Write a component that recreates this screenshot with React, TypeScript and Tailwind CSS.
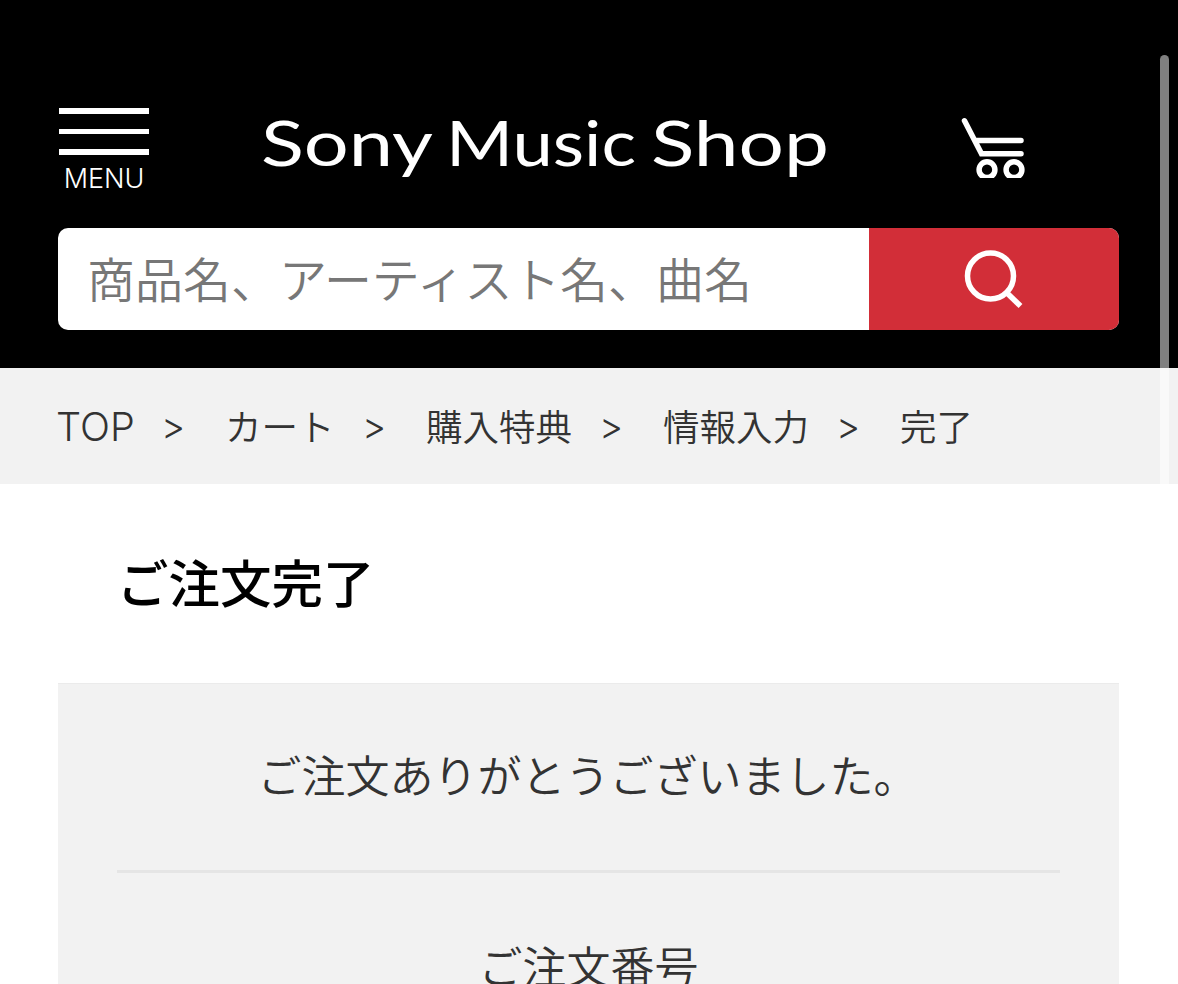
const crumbs = [
  { label: 'カート', width: 'w-[110px]' },
  { label: '購入特典', width: 'w-[146px]' },
  { label: '情報入力', width: 'w-[146px]' },
  { label: '完了', width: 'w-[74px]' },
]

/* ── icons ──────────────────────────────────────────────────── */
const CartIcon = () => (
  <svg width="66" height="61" viewBox="0 0 66 61" fill="none" stroke="currentColor" strokeWidth="5.5" strokeLinecap="round">
    <path d="M4.5 3.8 L21.5 36.7 H61 M16 23.6 H61" />
    <circle cx="27" cy="52.7" r="7.9" />
    <circle cx="54" cy="52.7" r="7.9" />
  </svg>
)

const SearchIcon = () => (
  <svg width="60" height="60" viewBox="0 0 60 60" fill="none" stroke="currentColor" strokeWidth="5.5">
    <circle cx="26.5" cy="27" r="23" />
    <path d="M42.5 43.5 L56.5 57" />
  </svg>
)

const Logo = () => (
  <svg width="580" height="100" viewBox="0 0 580 100" fill="currentColor" className="font-['Lato',sans-serif] text-[62.5px] font-normal">
    <text x="8" y="67" textLength="172" lengthAdjust="spacingAndGlyphs">Sony</text>
    <text x="193" y="67" textLength="190" lengthAdjust="spacingAndGlyphs">Music</text>
    <text x="398" y="67" textLength="178" lengthAdjust="spacingAndGlyphs">Shop</text>
  </svg>
)

function Header() {
  return (
    <header className="h-[368px] bg-black pl-[58px] pt-[107px] text-white">
      <div className="flex h-[121px] items-start">
        <button className="flex w-[92px] flex-col items-center">
          <span className="flex w-full flex-col gap-[15px] px-px pt-px">
            <span className="h-[5.5px] bg-white" />
            <span className="h-[5.5px] bg-white" />
            <span className="h-[5.5px] bg-white" />
          </span>
          <span className="mt-[8px] font-['Inter',sans-serif] text-[27px] leading-[32px] font-light">MENU</span>
        </button>
        <div className="-mt-[8px] ml-[103px] w-[580px]">
          <Logo />
        </div>
        <button className="ml-[127px] mt-[10px]">
          <CartIcon />
        </button>
      </div>
      <form className="flex h-[102px] w-[1061px] overflow-hidden rounded-[10px] bg-white">
        <div className="w-[811px] pl-[29px] text-[48px] leading-[98px] font-[350] whitespace-nowrap text-[#777]">
          商品名、<span className="tracking-[-0.2px]">アーティスト</span>名、曲名
        </div>
        <button type="button" className="flex w-[250px] items-center justify-center bg-[#d22e38]">
          <SearchIcon />
        </button>
      </form>
    </header>
  )
}

function Breadcrumb() {
  return (
    <nav className="flex h-[116px] items-center bg-[#f2f2f2] pl-[56px] text-[36.5px] leading-[60px] font-[350] whitespace-nowrap">
      <span className="w-[78px] pt-px font-['Inter',sans-serif] text-[39.5px] font-light">TOP</span>
      {crumbs.map((crumb) => (
        <span key={crumb.label} className="flex pb-px">
          <span className="w-[91px] pl-[27px] font-['Inter',sans-serif] text-[37px] font-light">&gt;</span>
          <span className={crumb.width}>{crumb.label}</span>
        </span>
      ))}
    </nav>
  )
}

export default function App() {
  return (
    <div className="relative h-[984px] w-[1178px] overflow-hidden bg-white font-['Noto_Sans_CJK_JP',sans-serif] text-[#333]">
      <Header />
      <Breadcrumb />
      <main className="px-[58px]">
        <h1 className="h-[199px] pl-[59px] pt-[57px] text-[51.5px] leading-[80px] font-medium text-black">ご注文完了</h1>
        <section className="h-[320px] w-[1061px] border-t border-[#ebebeb] bg-[#f2f2f2] px-[59px] text-center text-[44px] leading-[66px] font-[350]">
          <p className="h-[189px] border-b-3 border-[#e5e5e5] pt-[57px] pr-[2px]">ご注文ありがとうございました。</p>
          <p className="pt-[59px]">ご注文番号</p>
        </section>
      </main>

      {/* scroll thumb, lies over the page */}
      <div className="absolute right-[9px] top-[55px] h-[429px] w-[9px] rounded-t-full bg-white/50" />
    </div>
  )
}
